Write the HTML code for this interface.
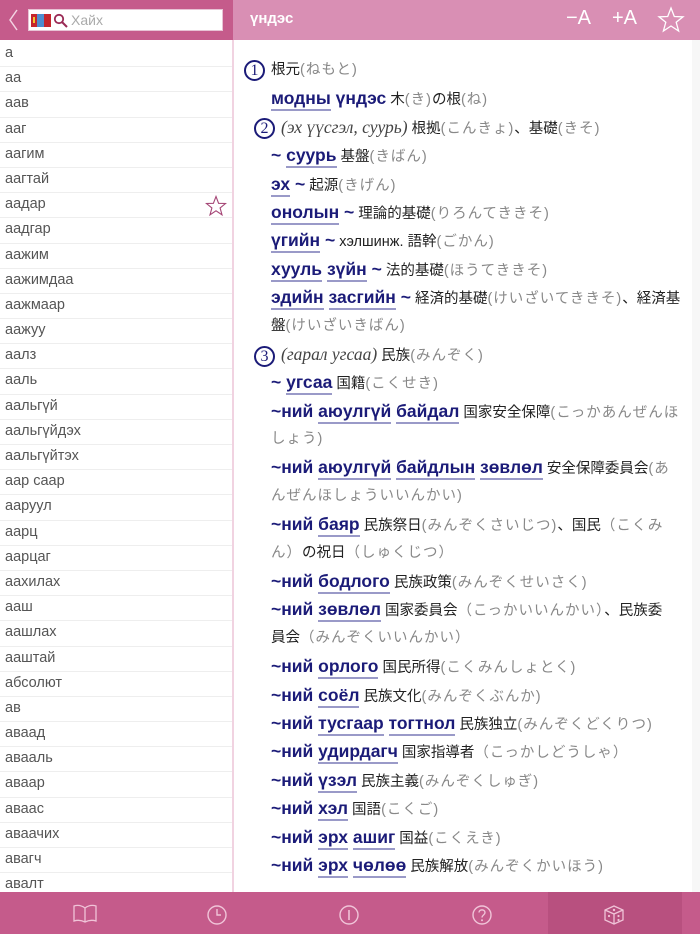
<!DOCTYPE html>
<html><head><meta charset="utf-8">
<style>
*{margin:0;padding:0;box-sizing:border-box}
body{width:700px;height:934px;overflow:hidden;background:#fff;font-family:"Liberation Sans","Noto Sans CJK JP",sans-serif;position:relative}
#hl{position:absolute;left:0;top:0;width:233px;height:40px;background:#c55b8b}
#hr{position:absolute;left:233px;top:0;width:467px;height:40px;background:#d98fb4}
#search{position:absolute;left:28px;top:9px;width:195px;height:22px;background:#fff;border:1px solid #e7c3d4}
#search span{position:absolute;left:42px;top:2px;font-size:14px;color:#aaa}
#title{position:absolute;left:250px;top:10px;color:#fff;font-weight:bold;font-size:15px}
.hb{position:absolute;top:7px;color:#fff;font-size:20px}
#list{position:absolute;left:0;top:42px;width:232px}
#list div{height:25.2px;border-bottom:1px solid #eee;font-size:14.5px;color:#555;padding:3px 0 0 5px;position:relative}
#div{position:absolute;left:232px;top:40px;width:2px;height:852px;background:#f1d3e1}
#content{position:absolute;left:244px;top:56px;width:446px;font-size:14.5px;color:#222}
.l{height:28.4px;line-height:28.4px;white-space:nowrap}
.i{padding-left:27px}
b{color:#1b1b78;font-size:17.5px}
u{text-decoration:none;border-bottom:2px solid #9a9ac8;padding-bottom:1px}
.g{color:#888;letter-spacing:1px}
.c{display:inline-block;width:21px;height:21px;border:2px solid #1b1b78;border-radius:50%;text-align:center;line-height:17px;font-family:"Liberation Serif",serif;font-size:16px;color:#1b1b78;vertical-align:middle;margin-right:6px}
em{font-family:"Liberation Serif",serif;font-size:17.5px;color:#444}
#bar{position:absolute;left:0;top:892px;width:700px;height:42px;background:#c55b8b}
#sel{position:absolute;left:548px;top:0;width:134px;height:42px;background:#b8507f}
.ti{position:absolute;top:12px}
#sb{position:absolute;left:692px;top:40px;width:8px;height:852px;background:#f7f7f7}
</style></head><body>
<div id="hl">
<svg style="position:absolute;left:7px;top:8px" width="12" height="24"><path d="M10 2 L3 12 L10 22" stroke="#f3d3e2" stroke-width="1.5" fill="none"/></svg>
<div id="search">
<svg style="position:absolute;left:2px;top:4px" width="20" height="13"><rect x="0" y="0" width="6" height="13" fill="#c4262e"/><rect x="6" y="0" width="7" height="13" fill="#4d8ed0"/><rect x="13" y="0" width="7" height="13" fill="#c4262e"/><rect x="2" y="3" width="2" height="6" fill="#f4c430"/></svg>
<svg style="position:absolute;left:24px;top:3px" width="15" height="15"><circle cx="6" cy="6" r="4.2" stroke="#9a2a55" stroke-width="1.8" fill="none"/><path d="M9 9 L14 14" stroke="#9a2a55" stroke-width="2"/></svg>
<span>Хайх</span></div>
</div>
<div id="hr"></div>
<div id="title">үндэс</div>
<div class="hb" style="left:566px">−A</div>
<div class="hb" style="left:612px">+A</div>
<svg style="position:absolute;left:657px;top:6px" width="28" height="28"><path d="M14 2 L17.3 10.5 L26 10.8 L19.2 16.3 L21.6 25 L14 20 L6.4 25 L8.8 16.3 L2 10.8 L10.7 10.5 Z" stroke="#fff" stroke-width="1.3" fill="none"/></svg>
<div id="list">
<div>а</div><div>аа</div><div>аав</div><div>ааг</div><div>аагим</div><div>аагтай</div>
<div>аадар<svg style="position:absolute;left:205px;top:2px" width="22" height="22"><path d="M11 1.5 L13.6 8.3 L20.5 8.5 L15.1 12.9 L17 19.8 L11 15.8 L5 19.8 L6.9 12.9 L1.5 8.5 L8.4 8.3 Z" stroke="#a54676" stroke-width="1.1" fill="none"/></svg></div>
<div>аадгар</div><div>аажим</div><div>аажимдаа</div><div>аажмаар</div><div>аажуу</div><div>аалз</div><div>ааль</div><div>аальгүй</div><div>аальгүйдэх</div><div>аальгүйтэх</div><div>аар саар</div><div>ааруул</div><div>аарц</div><div>аарцаг</div><div>аахилах</div><div>ааш</div><div>аашлах</div><div>ааштай</div><div>абсолют</div><div>ав</div><div>аваад</div><div>авааль</div><div>аваар</div><div>аваас</div><div>аваачих</div><div>авагч</div><div>авалт</div>
</div>
<div id="div"></div>
<div id="sb"></div>
<div id="content">
<div class="l"><span class="c">1</span>根元<span class="g">(ねもと)</span></div>
<div class="l i"><b><u>модны</u> үндэс</b> 木<span class="g">(き)</span>の根<span class="g">(ね)</span></div>
<div class="l" style="padding-left:10px"><span class="c">2</span><em>(эх үүсгэл, суурь)</em> 根拠<span class="g">(こんきょ)</span>、基礎<span class="g">(きそ)</span></div>
<div class="l i"><b>~ <u>суурь</u></b> 基盤<span class="g">(きばん)</span></div>
<div class="l i"><b><u>эх</u> ~</b> 起源<span class="g">(きげん)</span></div>
<div class="l i"><b><u>онолын</u> ~</b> 理論的基礎<span class="g">(りろんてききそ)</span></div>
<div class="l i"><b><u>үгийн</u> ~</b> хэлшинж. 語幹<span class="g">(ごかん)</span></div>
<div class="l i"><b><u>хууль</u> <u>зүйн</u> ~</b> 法的基礎<span class="g">(ほうてききそ)</span></div>
<div class="l i"><b><u>эдийн</u> <u>засгийн</u> ~</b> 経済的基礎<span class="g">(けいざいてききそ)</span>、経済基</div>
<div class="l i">盤<span class="g">(けいざいきばん)</span></div>
<div class="l" style="padding-left:10px"><span class="c">3</span><em>(гарал угсаа)</em> 民族<span class="g">(みんぞく)</span></div>
<div class="l i"><b>~ <u>угсаа</u></b> 国籍<span class="g">(こくせき)</span></div>
<div class="l i"><b>~ний <u>аюулгүй</u> <u>байдал</u></b> 国家安全保障<span class="g">(こっかあんぜんほ</span></div>
<div class="l i"><span class="g">しょう)</span></div>
<div class="l i"><b>~ний <u>аюулгүй</u> <u>байдлын</u> <u>зөвлөл</u></b> 安全保障委員会<span class="g">(あ</span></div>
<div class="l i"><span class="g">んぜんほしょういいんかい)</span></div>
<div class="l i"><b>~ний <u>баяр</u></b> 民族祭日<span class="g">(みんぞくさいじつ)</span>、国民<span class="g">（こくみ</span></div>
<div class="l i"><span class="g">ん）</span>の祝日<span class="g">（しゅくじつ）</span></div>
<div class="l i"><b>~ний <u>бодлого</u></b> 民族政策<span class="g">(みんぞくせいさく)</span></div>
<div class="l i"><b>~ний <u>зөвлөл</u></b> 国家委員会<span class="g">（こっかいいんかい）</span>、民族委</div>
<div class="l i">員会<span class="g">（みんぞくいいんかい）</span></div>
<div class="l i"><b>~ний <u>орлого</u></b> 国民所得<span class="g">(こくみんしょとく)</span></div>
<div class="l i"><b>~ний <u>соёл</u></b> 民族文化<span class="g">(みんぞくぶんか)</span></div>
<div class="l i"><b>~ний <u>тусгаар</u> <u>тогтнол</u></b> 民族独立<span class="g">(みんぞくどくりつ)</span></div>
<div class="l i"><b>~ний <u>удирдагч</u></b> 国家指導者<span class="g">（こっかしどうしゃ）</span></div>
<div class="l i"><b>~ний <u>үзэл</u></b> 民族主義<span class="g">(みんぞくしゅぎ)</span></div>
<div class="l i"><b>~ний <u>хэл</u></b> 国語<span class="g">(こくご)</span></div>
<div class="l i"><b>~ний <u>эрх</u> <u>ашиг</u></b> 国益<span class="g">(こくえき)</span></div>
<div class="l i"><b>~ний <u>эрх</u> <u>чөлөө</u></b> 民族解放<span class="g">(みんぞくかいほう)</span></div>
</div>
<div id="bar">
<div id="sel"></div>
<svg class="ti" style="left:72px" width="26" height="20"><path d="M13 4 C9 1 5 1 2 2 L2 17 C5 16 9 16 13 18 C17 16 21 16 24 17 L24 2 C21 1 17 1 13 4 Z M13 4 L13 18" stroke="#f0c4d8" stroke-width="1.3" fill="none"/></svg>
<svg class="ti" style="left:206px" width="22" height="22"><circle cx="11" cy="11" r="9" stroke="#f0c4d8" stroke-width="1.4" fill="none"/><path d="M11 5 L11 11 L15 11" stroke="#f0c4d8" stroke-width="1.4" fill="none"/></svg>
<svg class="ti" style="left:338px" width="22" height="22"><circle cx="11" cy="11" r="9" stroke="#f0c4d8" stroke-width="1.4" fill="none"/><path d="M11 6 L11 16" stroke="#f0c4d8" stroke-width="1.6"/></svg>
<svg class="ti" style="left:471px" width="22" height="22"><circle cx="11" cy="11" r="9" stroke="#f0c4d8" stroke-width="1.4" fill="none"/><path d="M8 8.5 C8 5 14 5 14 8.5 C14 11 11 11 11 13.5" stroke="#f0c4d8" stroke-width="1.4" fill="none"/><circle cx="11" cy="16.3" r="1" fill="#f0c4d8"/></svg>
<svg class="ti" style="left:603px" width="22" height="22"><path d="M11 2 L20 6 L20 16 L11 20 L2 16 L2 6 Z M2 6 L11 10 L20 6 M11 10 L11 20" stroke="#f0c4d8" stroke-width="1.3" fill="none"/><circle cx="11" cy="6" r="1.2" fill="#f0c4d8"/><circle cx="6" cy="12" r="1.1" fill="#f0c4d8"/><circle cx="15.5" cy="12" r="1.1" fill="#f0c4d8"/><circle cx="15.5" cy="16" r="1.1" fill="#f0c4d8"/></svg>
</div>
</body></html>
